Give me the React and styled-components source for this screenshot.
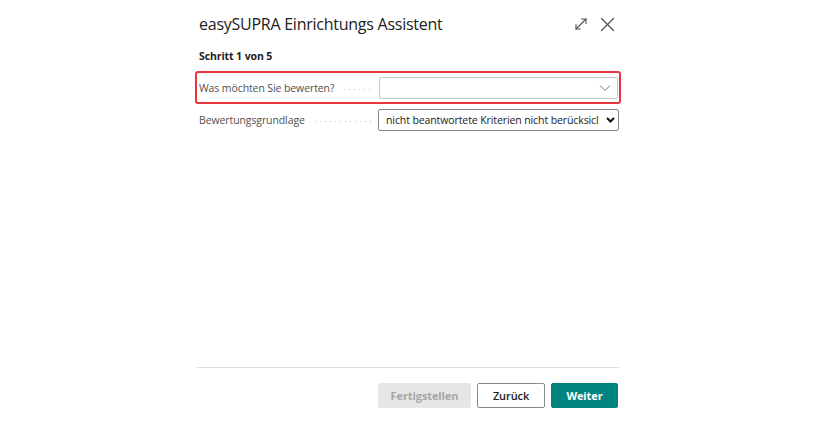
import React from 'react'
import styled, { createGlobalStyle } from 'styled-components'

const GlobalStyle = createGlobalStyle`
    html, body {
        margin: 0;
        padding: 0;
        background: #ffffff;
    }
    body {
        font-family: "Open Sans", "Noto Sans", "Liberation Sans", sans-serif;
        color: #212121;
    }
`

const Page = styled.div`
    width: 816px;
    height: 427px;
    display: flex;
    justify-content: center;
`

const Dialog = styled.div`
    width: 422px;
    height: 427px;
    display: flex;
    flex-direction: column;
    box-sizing: border-box;
    padding: 11px 0 19px;
`

const Header = styled.div`
    display: flex;
    align-items: center;
    justify-content: space-between;
    height: 26px;
    padding-left: 2px;
`

const Title = styled.h1`
    margin: 0;
    font-size: 16px;
    font-weight: 400;
    color: #212121;
    letter-spacing: -0.25px;
`

const HeaderActions = styled.div`
    display: flex;
    align-items: center;
    gap: 12px;
    color: #505050;
    padding-right: 4px;
`

const IconButton = styled.button`
    border: none;
    background: none;
    padding: 0;
    display: flex;
    color: inherit;
    cursor: pointer;
`

const Step = styled.div`
    margin-top: 12px;
    font-size: 10.5px;
    font-weight: 700;
    color: #212121;
    padding-left: 2px;
    letter-spacing: -0.1px;
`

const Form = styled.div`
    margin-top: 8px;
    display: flex;
    flex-direction: column;
    gap: 5px;
`

const Row = styled.div`
    display: grid;
    grid-template-columns: 181px 1fr;
    align-items: center;
    ${({ $highlight }) => $highlight ? `
        margin: 0 -2px 0 -2px;
        padding: 4px 0 3px 0;
        border: 2.5px solid #e8353f;
        border-radius: 3px;
        grid-template-columns: 181.5px 1fr;
    ` : ''}
`

const Label = styled.div`
    display: flex;
    align-items: center;
    font-size: 10.5px;
    letter-spacing: -0.1px;
    color: #505050;
    padding-left: 2px;
    padding-right: 6px;
    overflow: hidden;
    white-space: nowrap;

    &::after {
        content: '';
        flex: 1;
        margin-left: 8px;
        height: 1px;
        background-image: radial-gradient(circle, #bcbcbc 0.7px, transparent 0.8px);
        background-size: 5px 1px;
        background-repeat: repeat-x;
        align-self: center;
        margin-top: 2px;
    }
`

const Field = styled.div`
    position: relative;
    height: 22px;
    box-sizing: border-box;
    border: 1px solid #8a8a8a;
    border-radius: 2px;
    background: #fff;
    display: flex;
    align-items: center;
    padding: 0 18px 0 7px;
    font-size: 10.5px;
    letter-spacing: -0.1px;
    color: #212121;
    white-space: nowrap;
    overflow: hidden;
    ${({ $highlight }) => $highlight ? 'border-color: #c8c8c8; margin-right: 1px;' : ''}
`

const Chevron = styled.span`
    position: absolute;
    right: ${({ $bold }) => $bold ? '3px' : '6px'};
    top: 50%;
    transform: translateY(-50%);
    display: flex;
    background: #fff;
    padding-left: 3px;
`

const Spacer = styled.div`
    flex: 1;
`

const Divider = styled.hr`
    margin: 0;
    border: none;
    border-top: 1px solid #dcdcdc;
`

const Footer = styled.div`
    margin-top: 15px;
    display: flex;
    justify-content: flex-end;
    gap: 6px;
    padding-right: 1px;
`

const Button = styled.button`
    height: 25px;
    box-sizing: border-box;
    padding: 0 10px;
    font-family: inherit;
    font-size: 11px;
    font-weight: 700;
    letter-spacing: -0.1px;
    border-radius: 2px;
    cursor: pointer;
    min-width: 67px;

    ${({ $variant }) => {
        if ($variant === 'primary') return `
            background: #00847f;
            border: 1px solid #00847f;
            color: #ffffff;
        `
        if ($variant === 'disabled') return `
            background: #e6e6e6;
            border: 1px solid #e6e6e6;
            color: #a6a6a6;
            min-width: 93px;
            cursor: default;
        `
        return `
            background: #ffffff;
            border: 1px solid #8a8a8a;
            color: #212121;
            font-weight: 600;
            min-width: 68px;
        `
    }}
`

const ExpandIcon = () => (
    <svg width="14" height="14" viewBox="0 0 14 14" fill="none" stroke="currentColor" strokeWidth="1.1" strokeLinecap="round">
        <path d="M2 12 L12 2" />
        <path d="M7.5 2 H12 V6.5" />
        <path d="M2 7.5 V12 H6.5" />
    </svg>
)

const CloseIcon = () => (
    <svg width="15" height="15" viewBox="0 0 15 15" fill="none" stroke="currentColor" strokeWidth="1.3" strokeLinecap="round">
        <path d="M1.5 1.5 L13.5 13.5" />
        <path d="M13.5 1.5 L1.5 13.5" />
    </svg>
)

const ThinChevron = () => (
    <svg width="12" height="8" viewBox="0 0 12 8" fill="none" stroke="#707070" strokeWidth="1">
        <path d="M1 1.5 L6 6.5 L11 1.5" />
    </svg>
)

const BoldChevron = () => (
    <svg width="9" height="7" viewBox="0 0 9 7" fill="none" stroke="#111" strokeWidth="2">
        <path d="M1 1.5 L4.5 5 L8 1.5" />
    </svg>
)

export default function App() {
    return (
        <>
            <GlobalStyle />
            <Page>
                <Dialog>
                    <Header>
                        <Title>easySUPRA Einrichtungs Assistent</Title>
                        <HeaderActions>
                            <IconButton aria-label="Maximieren"><ExpandIcon /></IconButton>
                            <IconButton aria-label="Schließen"><CloseIcon /></IconButton>
                        </HeaderActions>
                    </Header>
                    <Step>Schritt 1 von 5</Step>
                    <Form>
                        <Row $highlight>
                            <Label>Was möchten Sie bewerten?</Label>
                            <Field $highlight>
                                <Chevron><ThinChevron /></Chevron>
                            </Field>
                        </Row>
                        <Row>
                            <Label>Bewertungsgrundlage</Label>
                            <Field>
                                nicht beantwortete Kriterien nicht berücksicl
                                <Chevron $bold><BoldChevron /></Chevron>
                            </Field>
                        </Row>
                    </Form>
                    <Spacer />
                    <Divider />
                    <Footer>
                        <Button $variant="disabled">Fertigstellen</Button>
                        <Button>Zurück</Button>
                        <Button $variant="primary">Weiter</Button>
                    </Footer>
                </Dialog>
            </Page>
        </>
    )
}
